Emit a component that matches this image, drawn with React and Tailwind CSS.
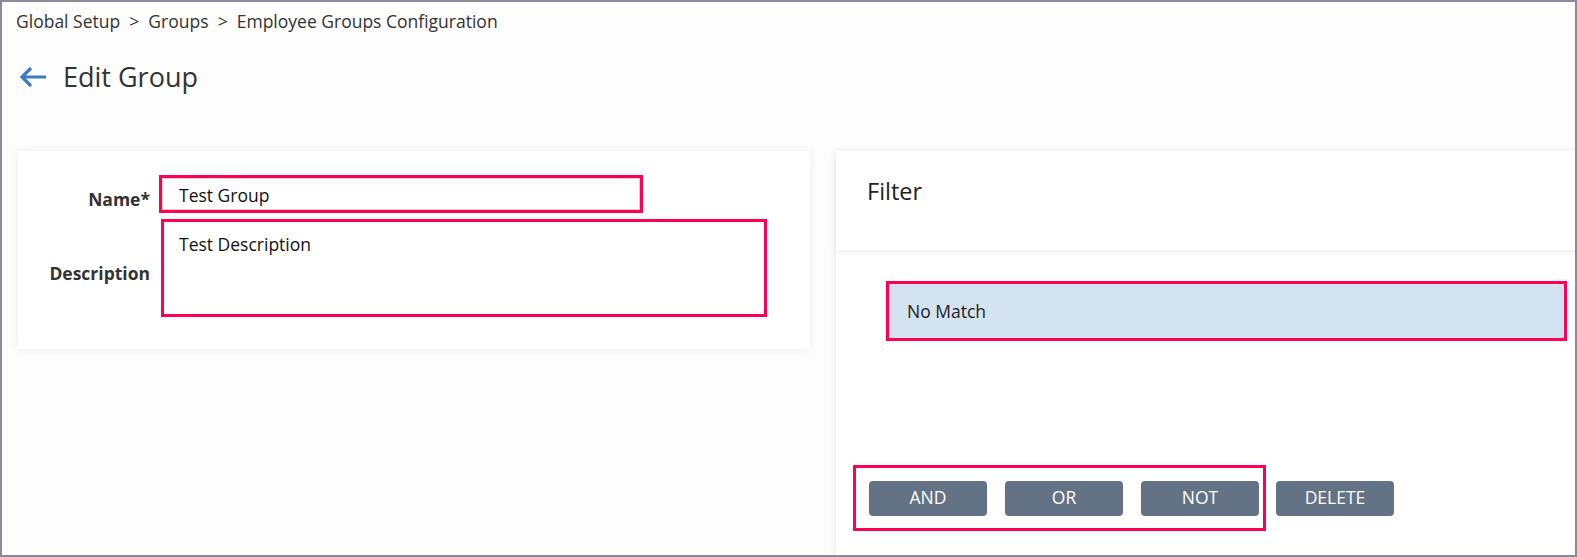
import React from 'react';

function BackArrow() {
  return (
    <svg width="30" height="24" viewBox="0 0 30 24" fill="none">
      <path d="M28 12H4M13 3L4 12l9 9" stroke="#3b7dc0" strokeWidth="3.2" strokeLinecap="butt" strokeLinejoin="miter" />
    </svg>
  );
}

function OpButton({ label }) {
  return (
    <button className="w-[118px] h-[35px] rounded-[4px] bg-[#637385] text-white text-[17.5px] leading-none">
      {label}
    </button>
  );
}

export default function App() {
  return (
    <div className="w-[1577px] h-[557px] border-2 border-[#8b899b] overflow-hidden bg-[#fdfdfd] text-[#333] font-['Open_Sans',sans-serif]">
      {/* Хлебные крошки */}
      <div className="pl-[14px] pt-[7px] text-[17.5px] leading-[24px] text-[#333] whitespace-nowrap">
        Global Setup&nbsp;&nbsp;&gt;&nbsp;&nbsp;Groups&nbsp;&nbsp;&gt;&nbsp;&nbsp;Employee Groups Configuration
      </div>

      <div className="flex items-center pl-[16px] mt-[26px] h-[36px]">
        <BackArrow />
        <h1 className="ml-[15px] text-[27px] leading-[36px] text-[#333]">Edit Group</h1>
      </div>

      <div className="flex items-start gap-[26px] pl-[16px] mt-[56px]">
        {/* Левая карточка */}
        <div className="w-[792px] h-[198px] shrink-0 bg-white shadow-[0_0_10px_rgba(0,0,0,0.07)] pt-[24px]">
          <div className="flex items-center">
            <div className="w-[132px] mt-[10px] text-right font-bold text-[17.5px] leading-[24px]">Name*</div>
            <div className="ml-[9px] w-[484px] h-[38px] border-[3px] border-[#ff0052]">
              <div className="h-full border border-[#d4d4d4] pl-[16px] pt-[3px] flex items-center text-[17.5px] text-[#111]">
                Test Group
              </div>
            </div>
          </div>
          <div className="flex items-center mt-[6px]">
            <div className="w-[132px] mt-[10px] text-right font-bold text-[17.5px] leading-[24px]">Description</div>
            <div className="ml-[11px] w-[606px] h-[98px] border-[3px] border-[#ff0052] pl-[15px] pt-[10px] text-[17.5px] leading-[24px] text-[#111]">
              Test Description
            </div>
          </div>
        </div>

        {/* Фильтр */}
        <div className="w-[790px] h-[420px] shrink-0 bg-white shadow-[0_0_10px_rgba(0,0,0,0.07)]">
          <div className="relative h-[99px] pl-[31px] pt-[25px] shadow-[0_3px_6px_rgba(0,0,0,0.06)]">
            <span className="text-[23.5px] leading-[30px] text-[#222]">Filter</span>
          </div>
          <div className="pt-[31px]">
            <div className="ml-[50px] w-[681px] h-[60px] border-[3px] border-[#ff0052] bg-[#d3e3f1] flex items-center pl-[18px] text-[17.5px] text-[#222]">
              No Match
            </div>
            <div className="flex items-center mt-[124px] ml-[17px]">
              <div className="w-[413px] h-[66px] border-[3px] border-[#ff0052] flex items-center gap-[18px] pl-[13px]">
                <OpButton label="AND" />
                <OpButton label="OR" />
                <OpButton label="NOT" />
              </div>
              <div className="ml-[10px]">
                <OpButton label="DELETE" />
              </div>
            </div>
          </div>
        </div>
      </div>
    </div>
  );
}
